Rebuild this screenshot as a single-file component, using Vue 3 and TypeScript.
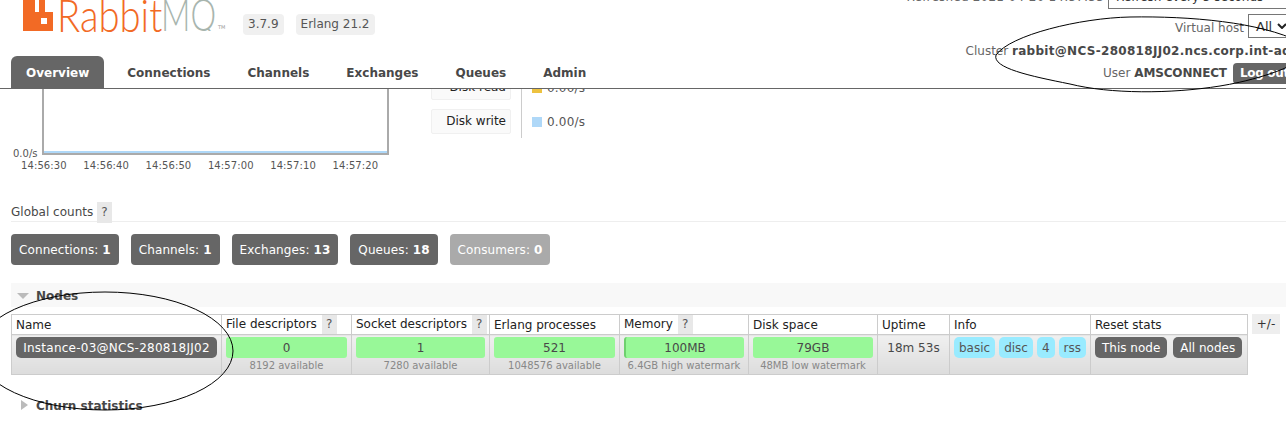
<script setup lang="ts">
// 顶部导航
const tabs = ['Overview', 'Connections', 'Channels', 'Exchanges', 'Queues', 'Admin']
const ticks = ['14:56:30', '14:56:40', '14:56:50', '14:57:00', '14:57:10', '14:57:20']
const counts = [
  { label: 'Connections:', value: 1 },
  { label: 'Channels:', value: 1 },
  { label: 'Exchanges:', value: 13 },
  { label: 'Queues:', value: 18 },
  { label: 'Consumers:', value: 0, empty: true }
]
const meters = [
  { value: '0', sub: '8192 available' },
  { value: '1', sub: '7280 available' },
  { value: '521', sub: '1048576 available' },
  { value: '100MB', sub: '6.4GB high watermark', edge: true },
  { value: '79GB', sub: '48MB low watermark' }
]
const infos = ['basic', 'disc', '4', 'rss']
</script>

<template>
  <div class="page">
    <header class="top">
      <div class="top-left">
        <div class="brand">
          <div class="logo">
            <svg class="mark" width="30" height="31" viewBox="0 0 30 31">
              <path d="M0 0H12V12H16V0H22V12H30V31H0ZM18 18V24H24V18Z" fill="#f26a25" fill-rule="evenodd" />
            </svg>
            <span class="rabbit">Rabbit</span>
            <span class="mq">MQ</span>
            <span class="tm">TM</span>
          </div>
          <span class="version">3.7.9</span>
          <span class="version">Erlang 21.2</span>
        </div>
        <nav class="tabs">
          <a v-for="(tab, i) in tabs" :key="tab" class="tab" :class="{ active: i === 0 }">{{ tab }}</a>
        </nav>
      </div>
      <div class="status">
        <div class="line refreshed">
          <span class="stamp">Refreshed 2021-04-20 14:57:33</span>
          <span class="select wide">Refresh every 5 seconds
            <svg width="10" height="6" viewBox="0 0 10 6"><path d="M1 1l4 4 4-4" fill="none" stroke="#222" stroke-width="2" /></svg>
          </span>
        </div>
        <div class="line vhost">
          <span class="vhost-label">Virtual host</span>
          <span class="select short">All
            <svg width="10" height="6" viewBox="0 0 10 6"><path d="M1 1l4 4 4-4" fill="none" stroke="#222" stroke-width="2" /></svg>
          </span>
        </div>
        <div class="line cluster">Cluster&nbsp;<b>rabbit@NCS-280818JJ02.ncs.corp.int-admin</b></div>
        <div class="line user">User&nbsp;<b>AMSCONNECT</b><span class="logout">Log out</span></div>
      </div>
    </header>

    <main class="main">
      <section class="charts">
        <div class="chart">
          <span class="zero">0.0/s</span>
          <div class="plot"><div class="series"></div></div>
          <div class="ticks">
            <span v-for="t in ticks" :key="t">{{ t }}</span>
          </div>
        </div>
        <div class="legend">
          <div class="legend-keys">
            <span class="legend-key">Disk read</span>
            <span class="legend-key">Disk write</span>
          </div>
          <div class="legend-vals">
            <div class="legend-val"><i class="swatch yellow"></i>0.00/s</div>
            <div class="legend-val"><i class="swatch blue"></i>0.00/s</div>
          </div>
        </div>
      </section>

      <h3 class="counts-title">Global counts <span class="help">?</span></h3>
      <div class="counts">
        <div v-for="c in counts" :key="c.label" class="count" :class="{ empty: c.empty }">
          {{ c.label }} <b>{{ c.value }}</b>
        </div>
      </div>

      <h2 class="section-head open"><i class="tri-down"></i>Nodes</h2>
      <div class="nodes">
        <table class="list">
          <thead>
            <tr>
              <th class="c-name">Name</th>
              <th class="c-fd">File descriptors <span class="help">?</span></th>
              <th class="c-sd">Socket descriptors <span class="help">?</span></th>
              <th class="c-ep">Erlang processes</th>
              <th class="c-mem">Memory <span class="help">?</span></th>
              <th class="c-disk">Disk space</th>
              <th class="c-up">Uptime</th>
              <th class="c-info">Info</th>
              <th class="c-reset">Reset stats</th>
            </tr>
          </thead>
          <tbody>
            <tr>
              <td><span class="node-btn">Instance-03@NCS-280818JJ02</span></td>
              <td v-for="m in meters" :key="m.sub" class="meter-cell">
                <div class="meter" :class="{ edge: m.edge }">{{ m.value }}</div>
                <div class="sub">{{ m.sub }}</div>
              </td>
              <td class="uptime">18m 53s</td>
              <td>
                <div class="chips"><span v-for="n in infos" :key="n" class="chip">{{ n }}</span></div>
              </td>
              <td>
                <div class="chips gap"><span class="reset">This node</span><span class="reset">All nodes</span></div>
              </td>
            </tr>
          </tbody>
        </table>
        <span class="plus">+/-</span>
      </div>

      <h2 class="section-head closed"><i class="tri-right"></i>Churn statistics</h2>
    </main>

    <!-- 截图上的手绘圈注 -->
    <svg class="marks" width="1286" height="423" viewBox="0 0 1286 423">
      <path d="M996 55C1010 35 1080 18 1130 17C1190 16 1260 22 1300 42C1330 55 1270 78 1220 86C1170 94 1110 94 1070 84C1030 76 992 68 996 55Z" />
      <ellipse cx="105" cy="351" rx="128" ry="59" />
    </svg>
  </div>
</template>

<style>
html, body { margin: 0; background: #fff; overflow: hidden; }
</style>

<style scoped>
.page {
  position: relative;
  width: 1286px;
  height: 423px;
  overflow: hidden;
  font-family: "DejaVu Sans", Verdana, sans-serif;
  font-size: 12px;
  color: #484848;
}

/* 头部 */
.top {
  position: relative;
  z-index: 2;
  display: flex;
  height: 88px;
  background: #fff;
  border-bottom: 1px solid #666;
}
.top-left {
  flex: none;
  display: flex;
  flex-direction: column;
  justify-content: space-between;
}
.brand { display: flex; align-items: flex-start; height: 56px; }
.logo {
  position: relative;
  width: 220px;
  height: 31px;
  margin-left: 23px;
  display: flex;
  align-items: flex-end;
  font-family: Lato, "Liberation Sans", sans-serif;
  font-weight: 300;
  font-size: 45px;
  line-height: 31px;
}
.mark { display: block; flex: none; margin-right: 4px; }
.rabbit, .mq {
  display: inline-block;
  flex: none;
  height: 31px;
  transform-origin: left center;
  white-space: nowrap;
}
.rabbit { color: #f26a25; width: 104px; transform: scaleX(0.85); }
.mq {
  color: #a8b5ae;
  width: 76px;
  height: 32px;
  margin-right: -19px;
  overflow: hidden;
  transform: scaleX(0.72);
}
.tm {
  flex: none;
  margin-left: 0;
  font-size: 5px;
  color: #999;
  line-height: 7px;
  font-weight: 400;
  font-family: "DejaVu Sans", sans-serif;
}
.version {
  margin: 14px 12px 0 0;
  padding: 3px 5px;
  line-height: 15px;
  background: #f0f0f0;
  border-radius: 4px;
  color: #555;
}
.status { flex: 1; margin-top: -15px; min-width: 0; }
.line {
  display: flex;
  justify-content: flex-end;
  align-items: center;
  height: 22px;
  white-space: nowrap;
  color: #666;
}
.line b { color: #484848; }
.stamp { letter-spacing: 0.2px; }
.refreshed { margin-right: -2px; height: 24px; }
.vhost { margin-right: -4px; margin-top: 5px; height: 24px; }
.vhost-label { padding-top: 3px; }
.cluster { margin-right: -31px; margin-top: 2px; }
.cluster b { letter-spacing: 0.3px; }
.user { margin-right: -10px; }
.user b { letter-spacing: -0.15px; }
.select {
  display: inline-flex;
  align-items: center;
  justify-content: space-between;
  box-sizing: border-box;
  height: 24px;
  margin-left: 4px;
  padding: 0 6px 0 7px;
  background: #fff;
  border: 1px solid #767676;
  color: #333;
  font-size: 13px;
}
.select.wide { width: 180px; font-size: 12px; }
.select.short { width: 42px; padding-right: 2px; }
.logout {
  margin-left: 6px;
  padding: 2px 7px;
  line-height: 17px;
  background: #666;
  color: #fff;
  font-weight: bold;
  letter-spacing: -0.3px;
  border-radius: 4px;
}
.tabs { display: flex; margin-left: 11px; }
.tab {
  height: 32px;
  line-height: 35px;
  padding: 0 15px;
  margin-right: 7px;
  font-weight: bold;
  color: #484848;
  border-radius: 6px 6px 0 0;
  white-space: nowrap;
}
.tab.active { background: #666; color: #fff; margin-right: 8px; }

/* 主体 */
.main { margin-top: -30px; padding-left: 11px; }
.charts { display: flex; height: 128px; }
.chart { position: relative; flex: none; width: 420px; }
.plot {
  position: absolute;
  left: 31px;
  top: 0;
  width: 347px;
  height: 96px;
  box-sizing: border-box;
  border: 2px solid #aaa;
  display: flex;
  align-items: flex-end;
}
.series { flex: 1; height: 2px; background: #afd8f8; }
.zero { position: absolute; left: 2px; top: 89px; font-size: 10px; color: #555; }
.ticks {
  position: absolute;
  left: 10px;
  top: 101px;
  display: flex;
  font-size: 10px;
  letter-spacing: 0.1px;
  color: #555;
}
.ticks span { width: 62.3px; flex: none; }
.legend { display: flex; align-items: flex-start; padding-top: 16px; }
.legend-keys { display: flex; flex-direction: column; gap: 9px; width: 80px; margin-right: 10px; }
.legend-key {
  box-sizing: border-box;
  height: 25px;
  line-height: 23px;
  padding-right: 4px;
  text-align: right;
  background: #fafafa;
  border: 1px solid #f0f0f0;
  border-radius: 2px;
  color: #222;
}
.legend-vals {
  display: flex;
  flex-direction: column;
  gap: 9px;
  padding: 0 0 4px 10px;
  border-left: 1px solid #ccc;
}
.legend-val { display: flex; align-items: center; height: 25px; color: #555; letter-spacing: 0.2px; }
.swatch { width: 10px; height: 10px; margin-right: 5px; }
.yellow { background: #edc240; }
.blue { background: #afd8f8; }

.counts-title {
  margin: 15px 0 0;
  height: 19px;
  line-height: 21px;
  font-size: 12px;
  font-weight: normal;
  border-bottom: 1px solid #eee;
  color: #484848;
}
.help {
  display: inline-block;
  width: 15px;
  text-align: center;
  background: #e8e8e8;
  color: #555;
}
.counts { display: flex; gap: 12px; margin-top: 12px; }
.count {
  height: 31px;
  line-height: 33px;
  padding: 0 8px;
  background: #666;
  color: #fff;
  border-radius: 4px;
  white-space: nowrap;
  letter-spacing: 0.1px;
}
.count.empty { background: #aaa; }

.section-head {
  position: relative;
  margin: 18px 0 0;
  height: 24px;
  line-height: 27px;
  padding-left: 25px;
  font-size: 12px;
  font-weight: bold;
  color: #484848;
}
.section-head.open { background: #f8f8f8; }
.section-head.closed { margin-top: 18px; line-height: 26px; }
.tri-down, .tri-right {
  position: absolute;
  width: 0;
  height: 0;
}
.tri-down {
  left: 6px;
  top: 10px;
  border-left: 6px solid transparent;
  border-right: 6px solid transparent;
  border-top: 6px solid #bbb;
}
.tri-right {
  left: 10px;
  top: 7px;
  border-top: 5px solid transparent;
  border-bottom: 5px solid transparent;
  border-left: 7px solid #bbb;
}

.nodes { display: flex; align-items: flex-start; gap: 4px; margin-top: 7px; }
.list {
  flex: none;
  width: 1236px;
  table-layout: fixed;
  border-collapse: collapse;
}
.list th, .list td { border: 1px solid #ccc; box-sizing: border-box; }
.list th {
  height: 20px;
  padding: 0 4px;
  text-align: left;
  font-weight: normal;
  color: #222;
  white-space: nowrap;
  background: #fff;
}
.list th .help { margin-left: 1px; height: 19px; line-height: 19px; }
.list td {
  padding: 2px 4px;
  height: 37px;
  vertical-align: top;
  text-align: center;
  background: linear-gradient(#f0f0f0, #dcdcdc);
}
.c-name { width: 210px; }
.c-fd { width: 130px; }
.c-sd { width: 138px; }
.c-ep { width: 130px; }
.c-mem { width: 129px; }
.c-disk { width: 129px; }
.c-up { width: 72px; }
.c-info { width: 141px; }
.c-reset { width: 157px; }
.node-btn {
  display: block;
  height: 21px;
  line-height: 22px;
  background: #666;
  color: #fff;
  border-radius: 5px;
  white-space: nowrap;
  letter-spacing: 0.25px;
}
.meter {
  height: 21px;
  line-height: 22px;
  background: #98f898;
  border-radius: 3px;
  color: #484848;
}
.meter.edge { border-left: 2px solid #6fd06f; }
.sub { font-size: 10px; color: #888; line-height: 13px; margin-top: 1px; white-space: nowrap; }
.uptime { line-height: 22px; }
.chips { display: flex; gap: 4px; }
.chips.gap { gap: 6px; }
.chip {
  height: 21px;
  line-height: 22px;
  padding: 0 5px;
  background: #99ebff;
  border-radius: 5px;
  color: #555;
}
.reset {
  height: 21px;
  line-height: 22px;
  padding: 0 7px;
  background: #666;
  color: #fff;
  border-radius: 5px;
  white-space: nowrap;
}
.plus {
  width: 28px;
  height: 20px;
  line-height: 20px;
  text-align: center;
  background: #eee;
  color: #333;
}

.marks {
  position: absolute;
  left: 0;
  top: 0;
  z-index: 3;
  pointer-events: none;
}
.marks path, .marks ellipse { fill: none; stroke: #000; stroke-width: 1; }
</style>
